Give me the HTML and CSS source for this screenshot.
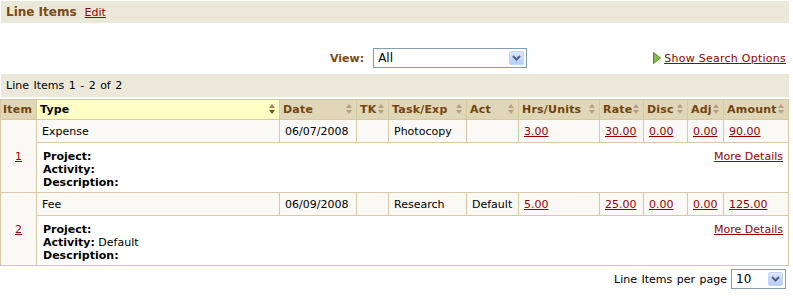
FILE: index.html
```html
<!DOCTYPE html>
<html lang="en">
<head>
  <meta charset="UTF-8">
  <title>Line Items</title>
  <link rel="stylesheet" href="styles.css">
</head>
<body>
  <div class="page">

    <!-- Title bar -->
    <div class="title-bar">
      <h2>Line Items</h2>
      <a href="#" class="edit-link">Edit</a>
    </div>

    <!-- View filter -->
    <div class="view-row">
      <label class="view-label">View:</label>
      <span class="select select-view">
        <span class="select-value">All</span>
        <span class="select-btn">
          <svg width="9" height="6" viewBox="0 0 9 6"><path d="M1 1 L4.5 4.5 L8 1" fill="none" stroke="#4d6185" stroke-width="2"/></svg>
        </span>
      </span>
      <a href="#" class="search-link">
        <svg width="8" height="12" viewBox="0 0 8 12"><polygon points="0.5,0.5 7.5,6 0.5,11.5" fill="#86bd45" stroke="#4f8a22"/></svg>
        <span>Show Search Options</span>
      </a>
    </div>

    <div class="count-bar">Line Items 1 - 2 of 2</div>

    <table class="items">
      <colgroup>
        <col style="width:36px"><col style="width:243px"><col style="width:77px"><col style="width:32px">
        <col style="width:78px"><col style="width:52px"><col style="width:81px"><col style="width:44px">
        <col style="width:44px"><col style="width:36px"><col style="width:65px">
      </colgroup>
      <thead>
        <tr>
          <th class="item-head">Item</th>
          <th class="sorted"><span>Type</span><i class="sort"></i></th>
          <th><span>Date</span><i class="sort"></i></th>
          <th><span>TK</span><i class="sort"></i></th>
          <th><span>Task/Exp</span><i class="sort"></i></th>
          <th><span>Act</span><i class="sort"></i></th>
          <th><span>Hrs/Units</span><i class="sort"></i></th>
          <th><span>Rate</span><i class="sort"></i></th>
          <th><span>Disc</span><i class="sort"></i></th>
          <th><span>Adj</span><i class="sort"></i></th>
          <th><span>Amount</span><i class="sort"></i></th>
        </tr>
      </thead>
      <tbody>
        <tr class="data">
          <td class="item" rowspan="2"><a href="#">1</a></td>
          <td>Expense</td>
          <td>06/07/2008</td>
          <td></td>
          <td>Photocopy</td>
          <td></td>
          <td><a href="#">3.00</a></td>
          <td><a href="#">30.00</a></td>
          <td><a href="#">0.00</a></td>
          <td><a href="#">0.00</a></td>
          <td><a href="#">90.00</a></td>
        </tr>
        <tr class="details">
          <td colspan="10">
            <a href="#" class="more">More Details</a>
            <div><b>Project:</b></div>
            <div><b>Activity:</b></div>
            <div><b>Description:</b></div>
          </td>
        </tr>
        <tr class="data">
          <td class="item" rowspan="2"><a href="#">2</a></td>
          <td>Fee</td>
          <td>06/09/2008</td>
          <td></td>
          <td>Research</td>
          <td>Default</td>
          <td><a href="#">5.00</a></td>
          <td><a href="#">25.00</a></td>
          <td><a href="#">0.00</a></td>
          <td><a href="#">0.00</a></td>
          <td><a href="#">125.00</a></td>
        </tr>
        <tr class="details">
          <td colspan="10">
            <a href="#" class="more">More Details</a>
            <div><b>Project:</b></div>
            <div><b>Activity:</b> Default</div>
            <div><b>Description:</b></div>
          </td>
        </tr>
      </tbody>
    </table>

    <!-- Paging -->
    <div class="paging">
      <span>Line Items per page</span>
      <span class="select select-page">
        <span class="select-value">10</span>
        <span class="select-btn">
          <svg width="9" height="6" viewBox="0 0 9 6"><path d="M1 1 L4.5 4.5 L8 1" fill="none" stroke="#4d6185" stroke-width="2"/></svg>
        </span>
      </span>
    </div>

  </div>
</body>
</html>
```

FILE: styles.css
```css
* {
  box-sizing: border-box;
}

body {
  margin: 0;
  font-family: 'DejaVu Sans', Verdana, sans-serif;
  font-size: 11px;
  color: #000;
}

a {
  color: #990000;
}

.page {
  width: 789px;
}

/* Title bar */
.title-bar {
  margin: 1px 0 0 1px;
  height: 22px;
  background: #ece8d9;
  display: flex;
  align-items: center;
  padding-left: 5px;
}

h2 {
  margin: 0;
  font-size: 12px;
  font-weight: bold;
  color: #7b4a14;
}

.edit-link {
  margin-left: 8px;
  font-size: 11px;
}

/* View row */
.view-row {
  display: flex;
  align-items: center;
  height: 20px;
  margin-top: 25px;
}

.view-label {
  margin-left: 330px;
  font-weight: bold;
  color: #7b4a14;
}

.select {
  display: inline-flex;
  align-items: center;
  justify-content: space-between;
  border: 1px solid #7f9db9;
  background: #fff;
  font-size: 12px;
  padding-left: 4px;
}

.select-view {
  margin-left: 9px;
  width: 154px;
  height: 20px;
}

.select-btn {
  width: 15px;
  height: 14px;
  margin-right: 2px;
  border-radius: 2px;
  background: linear-gradient(#dbe7fd, #b5cdf7);
  border: 1px solid #c3d5f8;
  display: flex;
  align-items: center;
  justify-content: center;
}

.search-link {
  margin-left: auto;
  margin-right: 3px;
  display: flex;
  align-items: center;
  gap: 3px;
}

.search-link span {
  text-decoration: underline;
  letter-spacing: 0.25px;
}

/* Count bar */
.count-bar {
  margin: 6px 0 0 1px;
  height: 23px;
  line-height: 23px;
  background: #ece8d9;
  padding-left: 5px;
  word-spacing: 1px;
}

/* Table */
.items {
  margin-top: 2px;
  width: 789px;
  table-layout: fixed;
  border-collapse: collapse;
  border: 1px solid #d8c9a2;
}

.items th,
.items td {
  border: 1px solid #d8c9a2;
  padding: 0 5px;
  white-space: nowrap;
  overflow: hidden;
}

.items th {
  height: 20px;
  background: #e0d7b8;
  color: #74430d;
  font-weight: bold;
  text-align: left;
  padding: 0 2px 0 3px;
  position: relative;
  letter-spacing: 0.2px;
}

.items th.item-head {
  padding: 0 2px;
}

.items th.sorted {
  background: #ffffc6;
  color: #000;
}

.sort {
  position: absolute;
  right: 3px;
  top: 4px;
  width: 7px;
  height: 11px;
}

.sort::before,
.sort::after {
  content: "";
  position: absolute;
  left: 0;
  border-left: 3.5px solid transparent;
  border-right: 3.5px solid transparent;
}

.sort::before {
  top: 0;
  border-bottom: 4px solid #b59f86;
}

.sort::after {
  top: 6px;
  border-top: 4px solid #b59f86;
}

.sorted .sort::before {
  border-bottom-color: #a07c55;
}

.sorted .sort::after {
  border-top-color: #7a4c16;
}

.data td {
  height: 23px;
  background: #faf9f6;
}

.items td.item {
  background: #faf9f6;
  text-align: center;
  vertical-align: middle;
}

.details td {
  height: 50px;
  background: #fff;
  vertical-align: top;
  padding: 7px 5px 0 6px;
  line-height: 13px;
}

.more {
  float: right;
}

/* Paging */
.paging {
  display: flex;
  justify-content: flex-end;
  align-items: center;
  gap: 4px;
  margin-top: 3px;
  padding-right: 3px;
  word-spacing: 1px;
}

.select-page {
  width: 55px;
  height: 20px;
}
```
